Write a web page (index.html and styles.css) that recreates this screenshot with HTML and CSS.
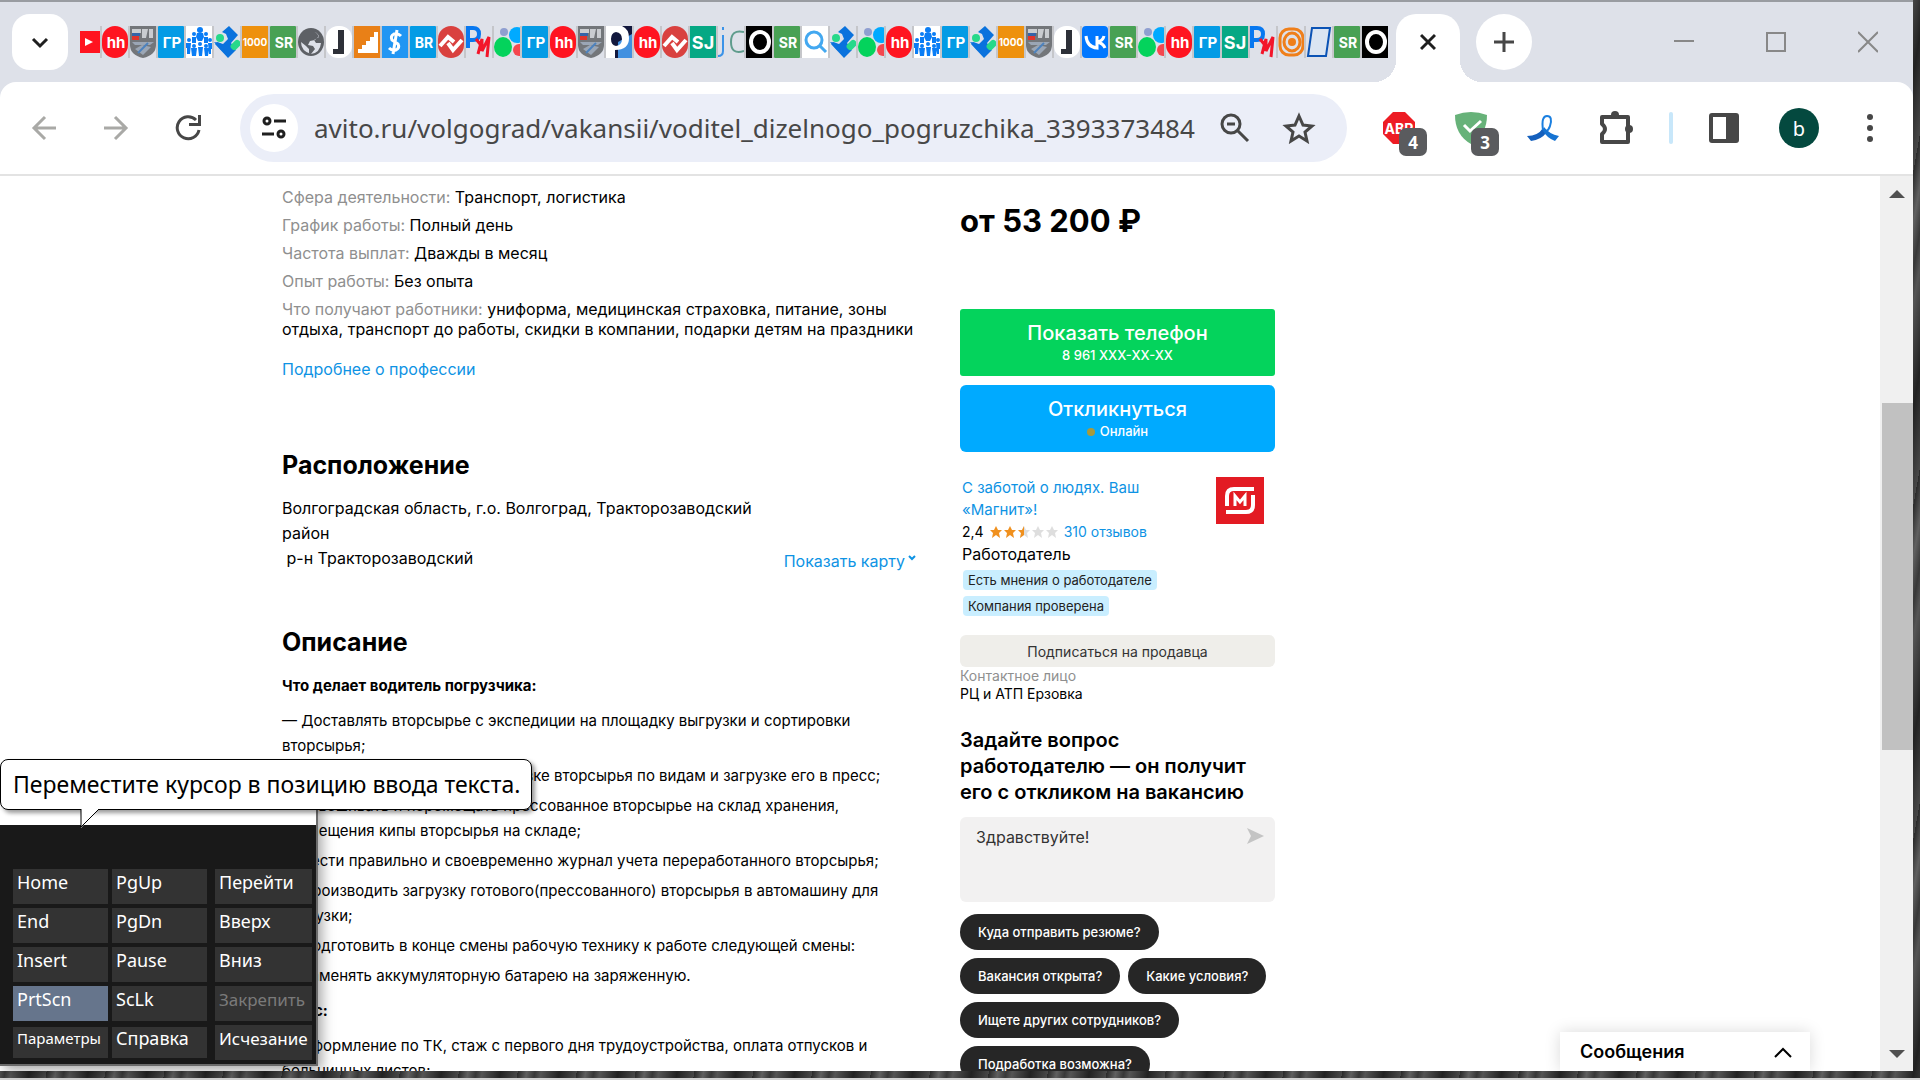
FILE: index.html
```html
<!DOCTYPE html>
<html lang="ru">
  <head>
    <meta charset="UTF-8" />
    <meta name="viewport" content="width=device-width, initial-scale=1.0" />
    <title>Водитель дизельного погрузчика</title>
    <link rel="stylesheet" href="styles.css">
  </head>
  <body>
    <!-- favicons -->
    <svg class="sprite">
      <symbol id="f-yt" viewBox="0 0 20 32"><path fill="#ff1420" d="M0 5h20v22H0z"/><path fill="#fff" d="M5 12l8 4-8 4z"/></symbol>
      <symbol id="f-hh" viewBox="0 0 26 32"><rect width="26" height="32" rx="13" fill="#ff1420"/><text x="14" y="22" class="ft">hh</text></symbol>
      <symbol id="f-shield" viewBox="0 0 26 32"><path fill="#73767a" d="M0 0h26v19q0 10-13 13Q0 29 0 19z"/><path fill="#c9ccd0" d="M2 3h9v4H2zM12 3l6 0-2 9h-4zM19 3h4v9h-4z"/><path fill="#3563a8" d="M2 7h8v3H2z"/><path fill="#e0342c" d="M2 10h7v4H2z"/><path fill="#9ba6b5" d="M2 16h22l-4 3H5zM5 23l7-4 9 2-8 8z"/><path stroke="#4d82bd" d="M8 27L18 17" stroke-width="2"/></symbol>
      <symbol id="f-gr" viewBox="0 0 26 32"><rect width="26" height="32" rx="1" fill="#039be5"/><text x="14" y="22" class="ft">ГР</text></symbol>
      <symbol id="f-people" viewBox="0 0 26 32"><path fill="#fff" d="M0 0h26v32H0z"/><g fill="#0a7df5"><circle cx="14" cy="4" r="3"/><circle cx="8" cy="8" r="2"/><circle cx="20" cy="8" r="2"/><circle cx="3" cy="14" r="2"/><circle cx="24" cy="14" r="2"/><path d="M11 7h6l1 4-2 4h-4l-2-4zM6 11h4v6H6zM18 11h4v6h-4z"/><circle cx="8" cy="20" r="2"/><circle cx="14" cy="18" r="2"/><circle cx="20" cy="20" r="2"/><path d="M0 17h5l-1 11H1v-6H0zM22 17h4v6h-1v5h-2zM5 22h6l-1 8H6zM12 21h5l-1 9h-3zM18 22h5l-1 8h-3z"/></g></symbol>
      <symbol id="f-puzzle" viewBox="0 0 26 32"><path fill="#0a72dd" d="M15 0l9 9-7 8 5 7-8 8-13-14 2-2 6 2 5-5-2-5-4-2z"/><path fill="#0a72dd" d="M0 16l6 1 5 8-4-1z"/><circle cx="6" cy="12" r="4" fill="#27d98a"/><rect x="16" y="16" width="11" height="7" rx="3" fill="#27d98a" transform="rotate(-45 21 19)"/></symbol>
      <symbol id="f-1000" viewBox="0 0 26 32"><path fill="#ee910d" d="M0 0h26v32H0z"/><text x="13" y="20" class="ft ft-s">1000</text></symbol>
      <symbol id="f-sr" viewBox="0 0 26 32"><rect width="26" height="32" rx="1" fill="#48a154"/><text x="14" y="22" class="ft ft-m">SR</text></symbol>
      <symbol id="f-globe" viewBox="0 0 26 32"><ellipse cx="13" cy="16" rx="13" ry="14" fill="#5d6065"/><path fill="#dee1e9" d="M14 5q5 1 7 5l-4 4-5 1-2 4 5 1 2 3-4 5-2-1v-4l-3-3-5-4q0 9 10 12 9-1 10-11h-5l-2-3 5-3q-2-5-7-6z"/></symbol>
      <symbol id="f-j" viewBox="0 0 26 32"><rect width="26" height="32" rx="12" fill="#fff"/><path fill="#2d3038" d="M12 4h6v24H7v-5h5z"/></symbol>
      <symbol id="f-steps" viewBox="0 0 26 32"><path fill="#e98017" d="M0 0h26v32H0z"/><path fill="#fff" d="M4 27v-4h4v-4h4v-4h4v-4h4V6h4v21z"/></symbol>
      <symbol id="f-dollar" viewBox="0 0 26 32"><path fill="#2196f3" d="M0 0h26v32H0z"/><path d="M19 10q-3-3-7-2-4 2-2 6l6 4q2 4-2 6-4 1-7-2M15 4l-4 24" fill="none" stroke="#fff" stroke-width="3"/></symbol>
      <symbol id="f-br" viewBox="0 0 26 32"><rect width="26" height="32" rx="1" fill="#039be5"/><text x="14" y="22" class="ft ft-m">BR</text></symbol>
      <symbol id="f-zig" viewBox="0 0 26 32"><rect width="26" height="32" rx="13" fill="#d9413f"/><path d="M2 20l8-9 6 5M10 17l5 7 9-10" fill="none" stroke="#fff" stroke-width="4"/></symbol>
      <symbol id="f-py" viewBox="0 0 26 32"><path d="M2 22V2h5q6 0 6 6t-6 6H3" fill="none" stroke="#0878f0" stroke-width="4"/><path d="M10 13l4 5M12 28l4-15v12l7-14-2 20" fill="none" stroke="#f3152a" stroke-width="3"/></symbol>
      <symbol id="f-avito" viewBox="0 0 26 32"><ellipse cx="9" cy="21" rx="9" ry="10" fill="#04d35c"/><circle cx="10" cy="6" r="4" fill="#8f9fd0"/><circle cx="23" cy="9" r="8" fill="#0af"/><circle cx="25" cy="24" r="6" fill="#f4474f"/></symbol>
      <symbol id="f-p" viewBox="0 0 26 32"><path fill="#12183d" d="M0 0h26v32H0z"/><path fill="#4190e0" d="M12 16l14-8v24H12z"/><path fill="#fff" fill-rule="evenodd" d="M0 0h16q7 3 7 12 0 12-14 12v8H0zM10 6q-5 1-5 7t5 7q6-1 6-7t-6-7z"/></symbol>
      <symbol id="f-sj" viewBox="0 0 26 32"><path fill="#05a884" d="M0 0h26v32H0z"/><text x="13" y="23" class="ft ft-l">SJ</text></symbol>
      <symbol id="f-jc" viewBox="0 0 26 32"><path d="M5 1v3M5 9v16q0 5-5 5" fill="none" stroke="#3b93e8" stroke-width="2"/><path d="M26 6q-13-3-13 10t13 9" fill="none" stroke="#5f9c8c" stroke-width="2"/></symbol>
      <symbol id="f-o" viewBox="0 0 26 32"><path d="M0 0h26v32H0z"/><ellipse cx="14" cy="16" rx="9" ry="10" fill="none" stroke="#fff" stroke-width="4"/></symbol>
      <symbol id="f-search" viewBox="0 0 26 32"><path fill="#fff" d="M0 0h26v32H0z"/><circle cx="12" cy="14" r="8" fill="none" stroke="#43a8f0" stroke-width="3"/><path d="M18 20l6 6" stroke="#43a8f0" stroke-width="3"/></symbol>
      <symbol id="f-vk" viewBox="0 0 26 32"><rect width="26" height="32" rx="4" fill="#07f"/><path d="M4 10q1 11 11 12V10M15 16q6-1 7-6M15 16q6 1 8 6" fill="none" stroke="#fff" stroke-width="3"/></symbol>
      <symbol id="f-target" viewBox="0 0 26 32"><g fill="none" stroke="#ef7f1a" stroke-width="3"><rect x="2" y="3" width="23" height="26" rx="9"/><ellipse cx="14" cy="16" rx="8" ry="9"/></g><circle cx="14" cy="16" r="4" fill="#ef7f1a"/></symbol>
      <symbol id="f-para" viewBox="0 0 26 32"><path d="M6 2h18l-4 28H2z" fill="#dbe5f2" stroke="#0b53b5" stroke-width="2"/></symbol>
    </svg>

    <div class="window">
      <header class="tabs">
        <button class="tab-search" aria-label="Поиск вкладок"><svg width="20" height="20"><path d="M3 7l7 7 7-7" fill="none" stroke="#1f1f1f" stroke-width="3"/></svg></button>
        <nav class="favs">
          <svg class="fav fav-first"><use href="#f-yt"/></svg>
          <svg class="fav"><use href="#f-hh"/></svg>
          <svg class="fav"><use href="#f-shield"/></svg>
          <svg class="fav"><use href="#f-gr"/></svg>
          <svg class="fav"><use href="#f-people"/></svg>
          <svg class="fav"><use href="#f-puzzle"/></svg>
          <svg class="fav"><use href="#f-1000"/></svg>
          <svg class="fav"><use href="#f-sr"/></svg>
          <svg class="fav"><use href="#f-globe"/></svg>
          <svg class="fav"><use href="#f-j"/></svg>
          <svg class="fav"><use href="#f-steps"/></svg>
          <svg class="fav"><use href="#f-dollar"/></svg>
          <svg class="fav"><use href="#f-br"/></svg>
          <svg class="fav"><use href="#f-zig"/></svg>
          <svg class="fav"><use href="#f-py"/></svg>
          <svg class="fav"><use href="#f-avito"/></svg>
          <svg class="fav"><use href="#f-gr"/></svg>
          <svg class="fav"><use href="#f-hh"/></svg>
          <svg class="fav"><use href="#f-shield"/></svg>
          <svg class="fav"><use href="#f-p"/></svg>
          <svg class="fav"><use href="#f-hh"/></svg>
          <svg class="fav"><use href="#f-zig"/></svg>
          <svg class="fav"><use href="#f-sj"/></svg>
          <svg class="fav"><use href="#f-jc"/></svg>
          <svg class="fav"><use href="#f-o"/></svg>
          <svg class="fav"><use href="#f-sr"/></svg>
          <svg class="fav"><use href="#f-search"/></svg>
          <svg class="fav"><use href="#f-puzzle"/></svg>
          <svg class="fav"><use href="#f-avito"/></svg>
          <svg class="fav"><use href="#f-hh"/></svg>
          <svg class="fav"><use href="#f-people"/></svg>
          <svg class="fav"><use href="#f-gr"/></svg>
          <svg class="fav"><use href="#f-puzzle"/></svg>
          <svg class="fav"><use href="#f-1000"/></svg>
          <svg class="fav"><use href="#f-shield"/></svg>
          <svg class="fav"><use href="#f-j"/></svg>
          <svg class="fav"><use href="#f-vk"/></svg>
          <svg class="fav"><use href="#f-sr"/></svg>
          <svg class="fav"><use href="#f-avito"/></svg>
          <svg class="fav"><use href="#f-hh"/></svg>
          <svg class="fav"><use href="#f-gr"/></svg>
          <svg class="fav"><use href="#f-sj"/></svg>
          <svg class="fav"><use href="#f-py"/></svg>
          <svg class="fav"><use href="#f-target"/></svg>
          <svg class="fav"><use href="#f-para"/></svg>
          <svg class="fav"><use href="#f-sr"/></svg>
          <svg class="fav"><use href="#f-o"/></svg>
        </nav>
        <div class="tab-active">
          <button class="icon-btn" aria-label="Закрыть вкладку"><svg width="16" height="18"><path d="M1 2l14 14M15 2L1 16" stroke="#1f1f1f" stroke-width="3"/></svg></button>
        </div>
        <button class="tab-new" aria-label="Новая вкладка"><svg width="20" height="20"><path d="M10 0v20M0 10h20" stroke="#474747" stroke-width="3"/></svg></button>
        <div class="win-btns">
          <button class="icon-btn" aria-label="Свернуть"><svg width="20" height="22"><path d="M0 10h20" stroke="#888" stroke-width="2"/></svg></button>
          <button class="icon-btn" aria-label="Развернуть"><svg width="20" height="22"><path d="M1 2h18v18H1z" fill="none" stroke="#888" stroke-width="2"/></svg></button>
          <button class="icon-btn" aria-label="Закрыть"><svg width="20" height="22"><path d="M0 1l20 20M20 1L0 21" stroke="#888" stroke-width="2"/></svg></button>
        </div>
      </header>

      <div class="toolbar">
        <div class="nav-btns">
          <button class="icon-btn" aria-label="Назад"><svg width="26" height="26"><path d="M25 13H3M14 2L3 13l11 11" fill="none" stroke="#a9a9a6" stroke-width="3"/></svg></button>
          <button class="icon-btn" aria-label="Вперёд"><svg width="26" height="26"><path d="M1 13h22M12 2l11 11-11 11" fill="none" stroke="#a9a9a6" stroke-width="3"/></svg></button>
          <button class="icon-btn" aria-label="Обновить"><svg width="26" height="26"><path d="M21 5A11 11 0 1 0 24 15" fill="none" stroke="#474747" stroke-width="3"/><path d="M26 0v11H14V8h9V0z" fill="#474747"/></svg></button>
        </div>
        <div class="omnibox">
          <button class="site-info" aria-label="Сведения о сайте"><svg width="26" height="24"><g fill="none" stroke="#1f1f1f" stroke-width="3"><circle cx="6" cy="5" r="3"/><path d="M13 5h12M1 18h12"/><circle cx="20" cy="18" r="3"/></g></svg></button>
          <input class="url" type="text" aria-label="Адрес" value="avito.ru/volgograd/vakansii/voditel_dizelnogo_pogruzchika_3393373484">
          <button class="icon-btn" aria-label="Масштаб"><svg width="30" height="30"><circle cx="11" cy="11" r="9" fill="none" stroke="#474747" stroke-width="3"/><path d="M7 11h8M17 17l11 11" stroke="#474747" stroke-width="3"/></svg></button>
          <button class="icon-btn" aria-label="В закладки"><svg width="34" height="32"><path d="M17 4l4 9 9 1-7 6 2 9-8-5-8 5 2-9-7-6 9-1z" fill="none" stroke="#474747" stroke-width="3"/></svg></button>
        </div>
        <div class="exts">
          <button class="ext" aria-label="Adblock Plus"><svg width="32" height="32"><path d="M10 0h12l10 10v12L22 32H10L0 22V10z" fill="#ed1c24"/><text x="16" y="22" class="ft abp">ABP</text></svg><span class="badge">4</span></button>
          <button class="ext" aria-label="AdGuard"><svg width="32" height="32"><path d="M0 3q16-6 32 0 0 20-16 29Q0 23 0 3z" fill="#67b279"/><path d="M9 13l6 6L26 9" fill="none" stroke="#fff" stroke-width="3"/></svg><span class="badge">3</span></button>
          <button class="ext" aria-label="Лента"><svg width="32" height="32"><path d="M0 24q11 0 16-8l4 4q-6 8-16 9z" fill="#1560bd"/><path d="M16 18q-2-14 4-14t3 10q-1 4-5 6" fill="none" stroke="#1a7fe0" stroke-width="2"/><path d="M17 15q5 7 15 9l-4 5q-8-3-12-10z" fill="#1673d2"/></svg></button>
          <button class="ext" aria-label="Расширения"><svg width="34" height="34"><path d="M3 6h26v25H3v-8q6-5 0-10z" fill="none" stroke="#474747" stroke-width="4" stroke-linejoin="round"/><circle cx="16" cy="4" r="4" fill="#474747"/><circle cx="30" cy="18" r="4" fill="#474747"/></svg></button>
          <span class="ext-sep"></span>
          <button class="ext" aria-label="Боковая панель"><svg width="30" height="30"><rect x="2" y="2" width="26" height="26" rx="1" fill="#fff" stroke="#474747" stroke-width="4"/><path d="M17 2h11v26H17z" fill="#474747"/></svg></button>
          <button class="avatar">b</button>
          <button class="ext" aria-label="Меню"><svg width="6" height="30"><g fill="#474747"><circle cx="3" cy="4" r="3"/><circle cx="3" cy="15" r="3"/><circle cx="3" cy="26" r="3"/></g></svg></button>
        </div>
      </div>

      <div class="viewport">
        <main class="page">
          <section class="info">
            <ul class="params">
              <li><span>Сфера деятельности:</span> Транспорт, логистика</li>
              <li><span>График работы:</span> Полный день</li>
              <li><span>Частота выплат:</span> Дважды в месяц</li>
              <li><span>Опыт работы:</span> Без опыта</li>
              <li><span>Что получают работники:</span> униформа, медицинская страховка, питание, зоны<br>отдыха, транспорт до работы, скидки в компании, подарки детям на праздники</li>
            </ul>
            <a class="link more" href="#">Подробнее о профессии</a>

            <h2>Расположение</h2>
            <div class="place">
              <address>Волгоградская область, г.о. Волгоград, Тракторозаводский<br>район<br>&nbsp;р-н Тракторозаводский</address>
              <a class="link" href="#">Показать карту<svg width="8" height="14"><path d="M1 3l3 3 3-3" fill="none" stroke="#0e93e4" stroke-width="2"/></svg></a>
            </div>

            <h2>Описание</h2>
            <div class="descr">
              <p class="lead">Что делает водитель погрузчика:</p>
              <p>— Доставлять вторсырье с экспедиции на площадку выгрузки и сортировки<br>вторсырья;</p>
              <p>— Принимать участие в сортировке вторсырья по видам и загрузке его в пресс;</p>
              <p>— Взвешивать и перемещать прессованное вторсырье на склад хранения,<br>размещения кипы вторсырья на складе;</p>
              <p>— Вести правильно и своевременно журнал учета переработанного вторсырья;</p>
              <p>— Производить загрузку готового(прессованного) вторсырья в автомашину для<br>погрузки;</p>
              <p>— Подготовить в конце смены рабочую технику к работе следующей смены:</p>
              <p>— Заменять аккумуляторную батарею на заряженную.</p>
              <p class="lead">У нас:</p>
              <p>— Оформление по ТК, стаж с первого дня трудоустройства, оплата отпусков и<br>больничных листов;</p>
            </div>
          </section>

          <aside class="side">
            <div class="price">от 53 200 ₽</div>
            <button class="cta cta-phone">Показать телефон<small>8 961 XXX-XX-XX</small></button>
            <button class="cta cta-reply">Откликнуться<small><i class="dot"></i>Онлайн</small></button>
            <div class="seller">
              <div class="seller-text">
                <a class="link" href="#">С заботой о людях. Ваш<br>«Магнит»!</a>
                <div class="rating">2,4
                  <svg width="68" height="12" fill="#dedede">
                    <path id="star" d="M6 0l2 4 4 0-3 3 1 5-4-3-4 3 1-5-3-3 4 0z" fill="#f0901e"/>
                    <use href="#star" x="14"/>
                    <path d="M34 0l2 4 4 0-3 3 1 5-4-3-4 3 1-5-3-3 4 0z"/>
                    <path d="M34 0v9l-4 3 1-5-3-3 4 0z" fill="#f0901e"/>
                    <path d="M48 0l2 4 4 0-3 3 1 5-4-3-4 3 1-5-3-3 4 0z"/>
                    <path d="M62 0l2 4 4 0-3 3 1 5-4-3-4 3 1-5-3-3 4 0z"/>
                  </svg>
                  <a class="link" href="#">310 отзывов</a>
                </div>
                <div class="role">Работодатель</div>
                <span class="chip">Есть мнения о работодателе</span>
                <span class="chip">Компания проверена</span>
              </div>
              <svg class="logo" width="48" height="47"><path fill="#e31b23" d="M0 0h48v47H0z"/><path d="M38 12H18q-7 0-7 7v10M10 35h20q7 0 7-7V18" fill="none" stroke="#fff" stroke-width="4"/><path d="M19 29V19l5 6 5-6v10" fill="none" stroke="#fff" stroke-width="3"/></svg>
            </div>
            <button class="subscribe">Подписаться на продавца</button>
            <div class="contact"><span>Контактное лицо</span><br>РЦ и АТП Ерзовка</div>
            <h3>Задайте вопрос<br>работодателю — он получит<br>его с откликом на вакансию</h3>
            <form class="ask">
              <textarea aria-label="Вопрос работодателю">Здравствуйте!</textarea>
              <button class="send" type="button" aria-label="Отправить"><svg width="18" height="18"><path d="M1 1l17 8-17 8 4-8z" fill="#c4c4c4"/></svg></button>
            </form>
            <div class="pills">
              <button>Куда отправить резюме?</button>
              <button>Вакансия открыта?</button>
              <button>Какие условия?</button>
              <button>Ищете других сотрудников?</button>
              <button>Подработка возможна?</button>
            </div>
          </aside>
        </main>
        <div class="scrollbar">
          <svg width="16" height="10"><path d="M0 9l8-8 8 8z" fill="#505050"/></svg>
          <div class="thumb"></div>
          <svg width="16" height="10"><path d="M0 1l8 8 8-8z" fill="#505050"/></svg>
        </div>
        <button class="messages">Сообщения<svg width="18" height="12"><path d="M1 11l8-8 8 8" fill="none" stroke="#000" stroke-width="2"/></svg></button>
      </div>
    </div>

    <!-- on-screen keyboard -->
    <div class="osk">
      <div class="osk-head"></div>
      <div class="keys">
        <div class="key-col">
          <button>Home</button>
          <button>End</button>
          <button>Insert</button>
          <button class="pressed">PrtScn</button>
          <button class="low small">Параметры</button>
        </div>
        <div class="key-col">
          <button>PgUp</button>
          <button>PgDn</button>
          <button>Pause</button>
          <button>ScLk</button>
          <button class="low">Справка</button>
        </div>
        <div class="key-col wide">
          <button>Перейти</button>
          <button>Вверх</button>
          <button>Вниз</button>
          <button disabled>Закрепить</button>
          <button>Исчезание</button>
        </div>
      </div>
    </div>
    <div class="hint">Переместите курсор в позицию ввода текста.<svg class="tail" width="22" height="20"><path d="M1 0v19L18 1V0z" fill="#fff"/><path d="M1 0v18L18 1" fill="none" stroke="#000"/></svg></div>
  </body>
</html>
```

FILE: styles.css
```css
* {
  box-sizing: border-box;
  margin: 0;
  padding: 0;
}
body {
  height: 100vh;
  overflow: hidden;
  display: flex;
  padding: 0 7px 9px 0;
  background-color: #424242;
  background-image: linear-gradient(to top, #d2d2d2 2px, transparent 2px),
    repeating-linear-gradient(100deg, #2a2a2a 0, #606060 9px, #383838 17px, #555 23px, #222 41px, #484848 58px);
  font-family: Inter, "Liberation Sans", sans-serif;
  font-size: 15px;
  color: #000;
}
button {
  border: none;
  background: none;
  font: inherit;
  color: inherit;
  cursor: pointer;
}
a {
  text-decoration: none;
}
ul {
  list-style: none;
}
.sprite {
  display: none;
}
.window {
  flex: 1;
  min-width: 0;
  display: flex;
  flex-direction: column;
  background: #dee1e9;
  border-top: 2px solid #999ca1;
}
.icon-btn,
.ext {
  display: flex;
  align-items: center;
  justify-content: center;
}

/* tabs */
.tabs {
  height: 80px;
  padding: 12px 35px 0 12px;
  display: flex;
}
.tab-search {
  width: 56px;
  height: 56px;
  padding-top: 4px;
  border-radius: 18px;
  background: #fff;
}
.favs {
  display: flex;
  padding: 12px 0 0 12px;
}
.fav {
  width: 28px;
  height: 32px;
  padding-left: 2px;
  background: linear-gradient(to right, #c5c6ca 2px, transparent 2px);
}
.fav-first {
  width: 20px;
  padding-left: 0;
  background: none;
}
.ft {
  font: bold 15px Inter, sans-serif;
  fill: #fff;
  text-anchor: middle;
}
.ft-s {
  font-size: 10px;
}
.ft-m {
  font-size: 14px;
}
.ft-l {
  font-size: 18px;
}
.abp {
  font-size: 14px;
}
.tab-active {
  position: relative;
  width: 64px;
  margin-left: 8px;
  border-radius: 20px 20px 0 0;
  background: #fff;
  display: flex;
  justify-content: center;
  padding-bottom: 12px;
}
.tab-active::before,
.tab-active::after {
  content: "";
  position: absolute;
  bottom: 0;
  width: 22px;
  height: 22px;
}
.tab-active::before {
  right: 100%;
  background: radial-gradient(circle at 0 0, #dee1e9 22px, #fff 22px);
}
.tab-active::after {
  left: 100%;
  background: radial-gradient(circle at 100% 0, #dee1e9 22px, #fff 22px);
}
.tab-new {
  width: 56px;
  height: 56px;
  padding-top: 4px;
  margin-left: 16px;
  border-radius: 50%;
  background: #fff;
}
.win-btns {
  margin-left: auto;
  padding-top: 16px;
  height: 40px;
  display: flex;
  gap: 72px;
}

/* toolbar */
.toolbar {
  height: 94px;
  padding: 0 40px 0 31px;
  display: flex;
  align-items: center;
  background: #fff;
  border-bottom: 2px solid #e3e3e3;
  border-radius: 16px 16px 0 0;
}
.nav-btns {
  display: flex;
  gap: 46px;
}
.omnibox {
  flex: 1;
  min-width: 0;
  height: 68px;
  margin-left: 39px;
  padding: 0 31px 0 10px;
  display: flex;
  align-items: center;
  gap: 16px;
  border-radius: 34px;
  background: #ebeef8;
}
.omnibox .icon-btn:last-child {
  margin-left: 16px;
}
.site-info {
  flex: none;
  width: 48px;
  height: 48px;
  padding-top: 4px;
  border-radius: 50%;
  background: #fff;
}
.url {
  flex: 1;
  min-width: 0;
  border: none;
  outline: none;
  background: none;
  color: #474747;
  font: 26px "Noto Sans", sans-serif;
}
.exts {
  display: flex;
  align-items: center;
  gap: 40px;
  margin-left: 36px;
}
.ext {
  position: relative;
}
.badge {
  position: absolute;
  left: 16px;
  top: 16px;
  width: 28px;
  height: 28px;
  border-radius: 7px;
  background: #5a5b5e;
  color: #fff;
  font: bold 17px/30px "Noto Sans", sans-serif;
}
.ext-sep {
  width: 4px;
  height: 32px;
  margin: 0 -4px;
  border-radius: 2px;
  background: #c8e7fa;
}
.avatar {
  width: 40px;
  height: 40px;
  margin-right: 8px;
  border-radius: 50%;
  background: #04493f;
  color: #fff;
  font: 20px "Noto Sans", sans-serif;
}

/* page */
.viewport {
  position: relative;
  flex: 1;
  min-height: 0;
  display: flex;
  overflow: hidden;
  background: #fff;
}
.page {
  flex: 1;
  min-width: 0;
  padding: 11px 0 0 282px;
  display: grid;
  grid-template-columns: 634px 315px;
  column-gap: 44px;
  white-space: nowrap;
}
.link {
  color: #0e93e4;
}
.params {
  display: grid;
  gap: 8px;
  font-size: 16px;
  line-height: 20px;
}
.params span,
.contact span {
  color: #8f8f8f;
}
.more {
  display: block;
  margin-top: 20px;
  font-size: 16px;
  line-height: 20px;
}
h2 {
  font-size: 25px;
  line-height: 32px;
}
.more + h2 {
  margin-top: 70px;
}
.place {
  display: flex;
  justify-content: space-between;
  align-items: flex-end;
  margin: 15px 0 52px;
  font-size: 16px;
  line-height: 25px;
}
.place address {
  font-style: normal;
  margin-bottom: 3px;
}
.place .link svg {
  margin-left: 3px;
}
.descr {
  display: grid;
  gap: 5px;
  margin-top: 15px;
  line-height: 25px;
}
.descr .lead {
  margin-bottom: 5px;
  font-weight: bold;
}
.descr p + .lead {
  margin-top: 5px;
}

.side {
  padding-top: 14px;
}
.price {
  font-size: 31px;
  font-weight: bold;
  line-height: 40px;
  margin-bottom: 68px;
}
.cta {
  display: block;
  width: 100%;
  height: 67px;
  margin-bottom: 9px;
  border-radius: 6px;
  color: #fff;
  font-size: 20px;
  font-weight: 500;
  line-height: 24px;
}
.cta small {
  display: block;
  font-size: 13px;
  line-height: 20px;
}
.cta-phone {
  background: #04d35c;
  border-radius: 3px;
}
.cta-reply {
  background: #0af;
}
.dot {
  display: inline-block;
  width: 8px;
  height: 8px;
  margin-right: 5px;
  border-radius: 50%;
  background: #a89a3c;
}
.seller {
  display: flex;
  justify-content: space-between;
  align-items: flex-start;
  padding: 16px 11px 0 2px;
  line-height: 22px;
}
.seller-text {
  display: flex;
  flex-direction: column;
  align-items: flex-start;
}
.rating {
  display: flex;
  align-items: center;
  gap: 6px;
  font-size: 14px;
}
.role {
  font-size: 16px;
}
.chip {
  margin: 5px 0 1px 1px;
  padding: 0 5px;
  border-radius: 4px;
  background: #c9eeff;
  color: #222;
  font-size: 13px;
  line-height: 20px;
}
.subscribe {
  width: 100%;
  height: 32px;
  margin-top: 18px;
  border-radius: 6px;
  background: #efeeea;
  color: #333;
  font-size: 14px;
}
.contact {
  font-size: 14px;
  line-height: 18px;
}
h3 {
  margin: 24px 0 12px;
  font-size: 20px;
  font-weight: 600;
  line-height: 26px;
}
.ask {
  position: relative;
  display: flex;
}
.ask textarea {
  flex: 1;
  height: 85px;
  padding: 10px 50px 10px 16px;
  border: none;
  border-radius: 6px;
  background: #f2f1f1;
  color: #333;
  font: 16px/20px Inter, sans-serif;
  resize: none;
}
.send {
  position: absolute;
  right: 11px;
  top: 10px;
}
.pills {
  display: flex;
  flex-wrap: wrap;
  gap: 8px;
  margin-top: 12px;
}
.pills button {
  height: 36px;
  padding: 0 18px;
  border-radius: 18px;
  background: #262626;
  color: #fff;
  font-size: 13px;
  font-weight: 500;
}

.scrollbar {
  width: 33px;
  padding: 13px 0 12px 0;
  display: flex;
  flex-direction: column;
  align-items: center;
  background: #f0f0f0;
}
.thumb {
  width: 100%;
  height: 347px;
  margin: 204px 0 auto;
  border-left: 2px solid #f0f0f0;
  background: #c1c1c1;
}
.messages {
  position: absolute;
  right: 103px;
  bottom: 0;
  width: 250px;
  height: 39px;
  padding: 0 18px 0 20px;
  display: flex;
  align-items: center;
  justify-content: space-between;
  background: #fff;
  box-shadow: 0 0 16px rgba(0, 0, 0, 0.15);
  font-size: 18px;
  font-weight: 600;
}

/* on-screen keyboard */
.osk {
  position: absolute;
  left: 0;
  bottom: 14px;
  width: 318px;
  border-right: 2px solid #6b6b6b;
  border-bottom: 2px solid #6b6b6b;
  background: #191919;
  box-shadow: 4px 4px 12px rgba(0, 0, 0, 0.35);
  font-family: "Noto Sans", sans-serif;
}
.osk-head {
  height: 22px;
  background: #fff;
}
.keys {
  display: flex;
  gap: 4px;
  padding: 44px 4px 4px 13px;
}
.key-col {
  width: 95px;
  display: flex;
  flex-direction: column;
  gap: 4px;
}
.key-col.wide {
  width: 97px;
  margin-left: 4px;
}
.key-col button {
  height: 35px;
  padding: 0 0 8px 4px;
  background: #333;
  color: #fff;
  font-size: 18px;
  line-height: 27px;
  text-align: left;
}
.key-col .low {
  height: 31px;
  margin-top: 2px;
  padding-bottom: 8px;
  line-height: 23px;
}
.key-col .small {
  font-size: 15px;
}
.key-col .pressed {
  background: #66758c;
}
.key-col button:disabled {
  color: #7a7a7a;
}
.key-col.wide button:nth-child(n + 4) {
  font-size: 17px;
}
.hint {
  position: absolute;
  left: 0;
  bottom: 270px;
  padding: 0 11px 0 12px;
  border: 1px solid #000;
  border-radius: 8px;
  background: #fff;
  box-shadow: 3px 3px 4px rgba(0, 0, 0, 0.4);
  font: 23px/49px "Noto Sans", sans-serif;
  white-space: nowrap;
}
.tail {
  position: absolute;
  left: 79px;
  top: 49px;
}
```
